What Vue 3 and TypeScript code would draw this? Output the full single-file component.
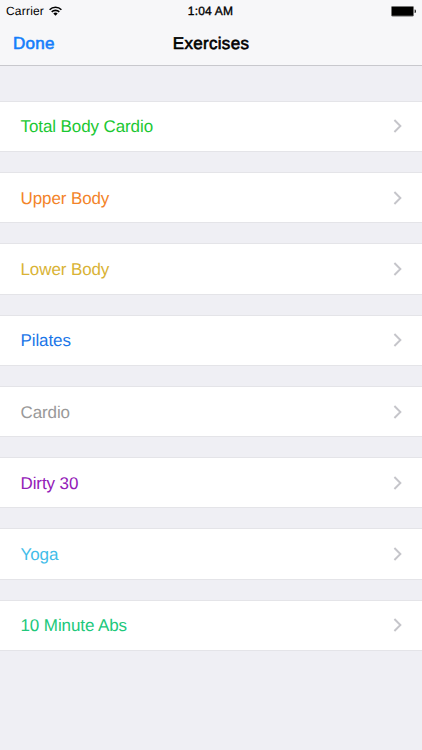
<script setup lang="ts">
interface Exercise {
  name: string
  tone: string
}

const exercises: Exercise[] = [
  { name: 'Total Body Cardio', tone: 'green' },
  { name: 'Upper Body', tone: 'orange' },
  { name: 'Lower Body', tone: 'gold' },
  { name: 'Pilates', tone: 'blue' },
  { name: 'Cardio', tone: 'gray' },
  { name: 'Dirty 30', tone: 'purple' },
  { name: 'Yoga', tone: 'sky' },
  { name: '10 Minute Abs', tone: 'mint' },
]
</script>

<template>
  <main class="screen">
    <header class="top">
      <div class="status">
        <div class="carrier">
          <span>Carrier</span>
          <svg class="wifi" width="13" height="10" viewBox="0 0 13 10" aria-hidden="true">
            <path d="M.6 3.7A8.3 8.3 0 0 1 12.4 3.7M2.7 5.9a5.4 5.4 0 0 1 7.6 0" fill="none" stroke="#000" stroke-width="1.6" />
            <path d="M6.5 9.8 4.3 7.6a3.1 3.1 0 0 1 4.4 0z" />
          </svg>
        </div>
        <span class="time">1:04 AM</span>
        <svg class="battery" width="26" height="11" viewBox="0 0 26 11" aria-hidden="true">
          <rect x=".5" y=".5" width="22" height="9.6" rx=".8" fill="#000" stroke="#777" stroke-width="1" />
          <path d="M23.6 3.5h.5q.9 0 .9 1.8t-.9 1.8h-.5z" fill="#222" />
        </svg>
      </div>
      <nav class="nav">
        <button class="done" type="button">Done</button>
        <h1 class="title">Exercises</h1>
      </nav>
    </header>
    <ul class="list">
      <li v-for="item in exercises" :key="item.name" class="row">
        <span class="label" :class="item.tone">{{ item.name }}</span>
        <svg class="chevron" width="10" height="14" viewBox="0 0 10 14" aria-hidden="true">
          <path d="M1.4 1 7.4 7l-6 6" fill="none" stroke="#c5c5ca" stroke-width="1.9" />
        </svg>
      </li>
    </ul>
  </main>
</template>

<style>
body {
  margin: 0;
  background: #efeff4;
}
</style>

<style scoped>
.screen {
  box-sizing: border-box;
  width: 100%;
  height: 750px;
  overflow: hidden;
  background: #efeff4;
  font-family: "Liberation Sans", Arial, sans-serif;
  text-rendering: geometricPrecision;
}
.top {
  box-sizing: border-box;
  height: 66px;
  background: #f7f7f9;
  border-bottom: 1px solid #c8c8cd;
}
.status {
  display: grid;
  grid-template-columns: 1fr auto 1fr;
  align-items: center;
  height: 22px;
  padding: 0 5px 0 6px;
  font-size: 12px;
  line-height: 22px;
}
.carrier {
  display: flex;
  align-items: center;
  gap: 5px;
  letter-spacing: 0.2px;
}
.wifi {
  margin-top: -1px;
}
.time {
  margin-right: 2px;
  letter-spacing: 0.2px;
  -webkit-text-stroke: 0.35px #000;
}
.battery {
  justify-self: end;
}
.nav {
  display: grid;
  grid-template-columns: 1fr auto 1fr;
  align-items: center;
  height: 43px;
  padding: 0 13px;
}
.done {
  justify-self: start;
  margin: 0;
  padding: 0;
  border: 0;
  background: none;
  color: #157efb;
  font: inherit;
  font-size: 17px;
  line-height: 43px;
  letter-spacing: 0.3px;
  -webkit-text-stroke: 0.6px #157efb;
}
.title {
  margin: 0;
  font-size: 17px;
  font-weight: 400;
  line-height: 43px;
  letter-spacing: 0.3px;
  -webkit-text-stroke: 0.6px #000;
}
.list {
  display: grid;
  grid-auto-rows: 51.3px;
  row-gap: 20px;
  margin: 0;
  padding: 34.7px 0 0;
  list-style: none;
}
.row {
  box-sizing: border-box;
  display: flex;
  align-items: center;
  justify-content: space-between;
  padding: 0 19px 0 20.5px;
  border-top: 1px solid #e4e4e8;
  border-bottom: 1px solid #e4e4e8;
  background: #fff;
}
.label {
  padding-top: 2px;
  font-size: 17px;
  letter-spacing: -0.1px;
}
.chevron {
  flex: none;
}
.green { color: #1bc832; }
.orange { color: #f38429; }
.gold { color: #d9b335; }
.blue { color: #1b76e8; }
.gray { color: #999; }
.purple { color: #9420b8; }
.sky { color: #42bde9; }
.mint { color: #20c87b; }
</style>
